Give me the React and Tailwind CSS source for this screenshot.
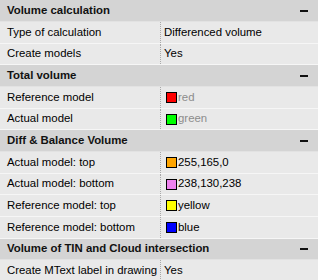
import React from "react";

const sections = [
  {
    title: "Volume calculation",
    rows: [
      { label: "Type of calculation", value: "Differenced volume" },
      { label: "Create models", value: "Yes" },
    ],
  },
  {
    title: "Total volume",
    rows: [
      { label: "Reference model", value: "red", color: "#ff0000", grey: true },
      { label: "Actual model", value: "green", color: "#00ff00", grey: true },
    ],
  },
  {
    title: "Diff & Balance Volume",
    rows: [
      { label: "Actual model: top", value: "255,165,0", color: "#ffa500" },
      { label: "Actual model: bottom", value: "238,130,238", color: "#ee82ee" },
      { label: "Reference model: top", value: "yellow", color: "#ffff00" },
      { label: "Reference model: bottom", value: "blue", color: "#0000ff" },
    ],
  },
  {
    title: "Volume of TIN and Cloud intersection",
    rows: [{ label: "Create MText label in drawing", value: "Yes" }],
  },
];

const heights = ["h-[22px]", "h-[22px]", "h-[21px]"];

export default function App() {
  let idx = 0;
  const nextH = () => heights[idx++ % 3];
  return (
    <div
      className="w-[318px] h-[280px] overflow-hidden bg-[#e9e9e9] text-[11.4px] text-black"
      style={{ fontFamily: "'Liberation Sans', Arial, sans-serif" }}
    >
      {sections.map((s) => (
        <div key={s.title}>
          <div
            className={`${nextH()} bg-[#d4d4d4] border-b border-[#e2e2e2] flex items-center justify-between pl-[7px] pr-[10px] font-bold text-[#111]`}
          >
            <span>{s.title}</span>
            <span className="w-[8px] h-[2px] bg-[#111]" />
          </div>
          {s.rows.map((r) => (
            <div
              key={r.label}
              className={`${nextH()} flex border-b border-[#f6f6f6] bg-[#e9e9e9]`}
            >
              <div className="w-[161px] flex items-center pl-[7px] border-r border-dotted border-[#a8a8a8]">
                {r.label}
              </div>
              <div className="flex-1 flex items-center pl-[3px]">
                {r.color && (
                  <span
                    className="ml-[2px] w-[11px] h-[11px] border border-black mr-[1px]"
                    style={{ backgroundColor: r.color }}
                  />
                )}
                <span className={r.grey ? "text-[#8c8c8c]" : ""}>{r.value}</span>
              </div>
            </div>
          ))}
        </div>
      ))}
    </div>
  );
}
